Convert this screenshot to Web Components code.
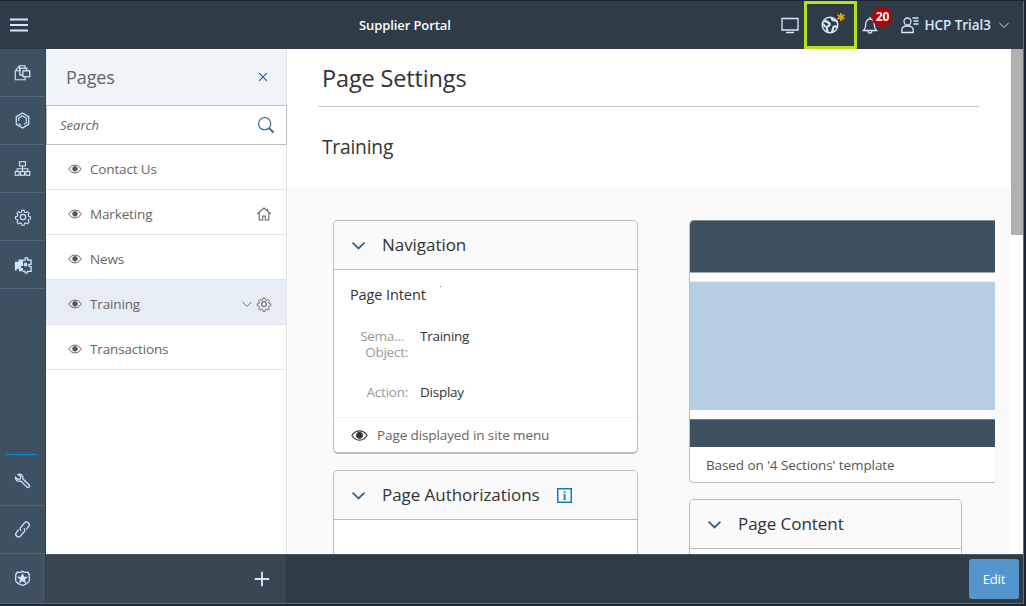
<!DOCTYPE html>
<html lang="en"><head><meta charset="utf-8"><title>Supplier Portal</title>
<style>
html,body{margin:0;height:606px;overflow:hidden;background:#1b2630;font-family:"Open Sans","Liberation Sans",sans-serif}
</style></head><body>
<app-shell>
  <app-header slot="header"></app-header>
  <side-rail slot="rail"></side-rail>
  <pages-panel slot="panel">
    <page-row label="Contact Us"></page-row>
    <page-row label="Marketing" trail="home"></page-row>
    <page-row label="News"></page-row>
    <page-row label="Training" selected trail="settings"></page-row>
    <page-row label="Transactions"></page-row>
  </pages-panel>
  <settings-main slot="main">
    <info-card slot="left" title="Navigation" style="height:234px"><nav-details></nav-details></info-card>
    <info-card slot="left" title="Page Authorizations" info style="height:200px"></info-card>
    <template-preview slot="right"></template-preview>
    <info-card slot="right" title="Page Content" style="width:273px;height:200px"></info-card>
  </settings-main>
  <app-footer slot="footer"></app-footer>
</app-shell>
<script>
const ICONS={
menu:'<path d="M1 4.500h18M1 10h18M1 15.500h18" stroke-width="2"/>',
monitor:'<path d="M2 3.500h16v11.500H2zM6 17.500h8"/>',
globe:'<circle cx="10" cy="10" r="7.800" stroke-width="1.500"/><path d="M3.500 5.800c2.500.2 4.500 1 5.800 2.400 1.400 1.500-.4 3-2 3.300-1.300.4-.6 2.500.6 5.300M12 2.800c-.5 1.700.6 2.800 2.400 2.700 1.200 0 2.200.2 3 1.500M17.500 12.500c-2-1.800-4.300-1.400-4.500.8-.2 1.800-.7 3-1.400 4.200M2.600 9c1.300.8 2.200 1.600 2.500 3" stroke-width="2.200"/>',
bell:'<path d="M3.500 15.500c1.800-1.500 2.200-3 2.200-6 0-3 1.800-5.500 4.300-5.500s4.300 2.500 4.300 5.500c0 3 .4 4.500 2.200 6zM8 15.800c0 3 4 3 4 0M10 4V2"/>',
user:'<circle cx="7.500" cy="6.500" r="3.500"/><path d="M1.800 17.500v-2.500c0-2.500 2-4 5.700-4s5.700 1.500 5.700 4v2.500zM12.500 3h6M13.500 6h5M13.500 9h5"/>',
chev:'<path d="M3.500 7l6.500 6.500L16.500 7"/>',
chevb:'<path d="M3 6.500l7 7 7-7" stroke-width="2"/>',
close:'<path d="M4.500 4.500l11 11M15.500 4.500l-11 11" stroke-width="1.700"/>',
search:'<circle cx="8.500" cy="8.500" r="6.800"/><path d="M13.500 13.500l5 5" stroke-width="2"/>',
eye:'<path d="M1 10c2.500-3.800 5.500-5.500 9-5.500s6.500 1.700 9 5.500c-2.500 3.800-5.500 5.500-9 5.500S3.500 13.800 1 10z"/><circle cx="10" cy="9.800" r="3.300" fill="currentColor"/>',
home:'<path d="M1.500 10L10 2.500l8.500 7.500M4 8.500V17.500h4.500v-5h3v5H16V8.500M14.500 5.500V3"/>',
settings:'<path d="M8.600 1.800h2.800l.5 2.200 1.700.7 1.900-1.200 2 2-1.200 1.900.7 1.700 2.200.5v2.800l-2.200.5-.7 1.700 1.200 1.900-2 2-1.900-1.200-1.700.7-.5 2.200H8.600l-.5-2.200-1.700-.7-1.900 1.200-2-2 1.200-1.900-.7-1.700-2.200-.5V9.600l2.200-.5.7-1.700-1.200-1.900 2-2 1.900 1.200 1.700-.7z" transform="translate(1 1) scale(.9)"/><circle cx="10" cy="10" r="3"/>',
pages:'<path d="M1.500 8L6.500 2H13v3M1.500 8v10.500H13V15M6.500 2.500V8H1.500"/><rect x="7" y="5" width="8" height="8" stroke-width="1.500"/><rect x="10.500" y="8" width="8" height="7" fill="#3f5161" stroke-width="1.500"/>',
cube:'<path d="M10 1.200l7.300 4.200v9.200L10 18.800l-7.300-4.200V5.400z" stroke-width="1.500"/><path d="M10 4.500l4.500 2.600v5.800L12 14.400M10 4.500L5.500 7.100v3.400M8.500 15.500l-3-1.800"/>',
sitemap:'<rect x="6.500" y="2" width="7" height="5"/><rect x="1.500" y="13.500" width="4.500" height="4.500"/><rect x="7.800" y="13.500" width="4.500" height="4.500"/><rect x="14" y="13.500" width="4.500" height="4.500"/><path d="M10 7v6.500M3.700 13.500V10.300h12.600v3.200"/>',
puzzle:'<path d="M1 6.500h4V4h5v7H8.500c-1.200 0-1.200 2.200 0 2.200H10V17H5.500v-2c0-1-2.500-1-2.500 0v1H1z" fill="currentColor" stroke="none"/><path d="M10 4.500h2.200V3c0-1.500 3-1.500 3 0v1.500H19V9.200h-1.700c-1.300 0-1.300 2.600 0 2.600H19V17h-4v1c0 1.300-2.800 1.300-2.800 0v-1H10" stroke-width="1.400"/><circle cx="12.800" cy="9.500" r="1.500" fill="currentColor"/>',
wrench:'<path d="M1.800 5l3.300 2.600 2.500-.8.500-2.400L4.800 1.800c3.300-1.200 6.600 1.500 5.700 5.300l7.400 7c1.500 1.600-1 4-2.600 2.500l-7.300-7.100C4.200 10.500 1 8.500 1.800 5z" stroke-width="1.500"/>',
link:'<g transform="rotate(-50 10 10)" stroke-width="1.500"><path d="M7 6.800H2.800a3.200 3.200 0 0 0 0 6.400H10.500a3.200 3.200 0 0 0 1.500-3"/><path d="M13 13.200h4.200a3.200 3.200 0 0 0 0-6.400H9.500a3.200 3.200 0 0 0-1.500 3"/></g>',
shield:'<path d="M10 1.500c1.500 1.200 3.800 1.500 6.200 1 .2 1.500.8 2.200 1.800 2.700-.8 4 1 5-.3 8-1 2-4.700 3.900-7.700 5-3-1.100-6.700-3-7.700-5-1.300-3 .5-4-.3-8 1-.5 1.600-1.200 1.800-2.700 2.400.5 4.700.2 6.200-1z" stroke-width="1.500"/><path d="M10 5l1.500 3.300 3.500.3-2.700 2.300.9 3.500-3.200-1.900-3.200 1.900.9-3.500L5 8.600l3.500-.3z" fill="currentColor"/>',
plus:'<path d="M10 1v18M1 10h18" stroke-width="2.300"/>',
star:'<path d="M10 2v16M3 6l14 8M17 6L3 14" stroke-width="3.200" stroke="#f0ab00"/>'
};
class UiIcon extends HTMLElement{
  connectedCallback(){
    const s=this.getAttribute('size')||20,n=this.getAttribute('name');
    this.attachShadow({mode:'open'}).innerHTML=`<style>:host{display:inline-flex;flex:none;line-height:0}svg{fill:none;stroke:currentColor;stroke-width:1.300;overflow:visible}</style><svg width="${s}" height="${s}" viewBox="0 0 20 20">${ICONS[n]}</svg>`;
  }
}
customElements.define('ui-icon',UiIcon);

function def(name,html){
  customElements.define(name,class extends HTMLElement{
    connectedCallback(){
      this.attachShadow({mode:'open'}).innerHTML=html;
    }
  });
}

def('app-shell',`<style>
:host{display:block;box-sizing:border-box;width:1026px;height:606px;padding:1px 2px 2px 0;background:#1b2630}
.win{height:100%;box-sizing:border-box;border-right:1px solid #2d78b8;border-bottom:1px solid #2d78b8;display:flex;flex-direction:column}
.body{flex:1;display:flex;min-height:0}
.right{flex:1;min-width:0;display:flex;flex-direction:column}
.mid{flex:1;min-height:0;display:flex;overflow:hidden}
</style>
<div class="win"><slot name="header"></slot>
<div class="body"><slot name="rail"></slot>
<div class="right"><div class="mid"><slot name="panel"></slot><slot name="main"></slot></div><slot name="footer"></slot></div></div></div>`);

def('app-header',`<style>
:host{display:flex;flex:none;height:48px;align-items:center;background:#2f3c48;color:#d1e8ff;position:relative}
.burger{margin-left:9px}
.title{position:absolute;left:359px;top:15px;font-size:13px;line-height:18px;font-weight:600;color:#fff;letter-spacing:-.1px}
.end{margin-left:auto;display:flex;align-items:center;height:48px;padding-right:12px}
.mon{margin-right:4px}
.hl{box-sizing:border-box;width:53px;height:48px;border:3px solid #b4e31c;display:flex;align-items:center;justify-content:center;position:relative;padding-right:2px}
.star{position:absolute;left:29px;top:8px}
.bell{position:relative;width:26px;height:48px;display:flex;align-items:center;justify-content:center;margin-right:17px}
.badge{position:absolute;left:15px;top:6px;min-width:20px;height:20px;border-radius:10px;background:#b00;color:#fff;font-size:12px;font-weight:700;line-height:20px;text-align:center;letter-spacing:-.2px}
.name{font-size:13.500px;font-weight:600;color:#d1e8ff;margin:0 6px 0 4px;letter-spacing:-.05px;white-space:nowrap}
</style>
<ui-icon class="burger" name="menu" size="20"></ui-icon>
<span class="title">Supplier Portal</span>
<div class="end">
<ui-icon class="mon" name="monitor" size="20"></ui-icon>
<div class="hl"><ui-icon name="globe" size="20"></ui-icon><ui-icon class="star" name="star" size="10"></ui-icon></div>
<div class="bell"><ui-icon name="bell" size="20"></ui-icon><span class="badge">20</span></div>
<ui-icon name="user" size="20"></ui-icon>
<span class="name">HCP Trial3</span>
<ui-icon name="chev" size="14"></ui-icon>
</div>`);

customElements.define('rail-item',class extends HTMLElement{connectedCallback(){
 this.attachShadow({mode:'open'}).innerHTML=`<style>:host{display:flex;height:47px;align-items:center;justify-content:center;border-bottom:1px solid #50667a;color:#cfe6ff}:host([last]){border-bottom:0;height:49px}</style><ui-icon name="${this.getAttribute('name')}" size="${this.getAttribute('size')||17}"></ui-icon>`;
}});
def('side-rail',`<style>
:host{display:flex;flex:none;flex-direction:column;box-sizing:border-box;width:46px;background:#3f5161;border-right:1px solid #33414f}
.sp{flex:1}
.mark{height:1px;background:#0a8ad6;margin:0 8px 3px 6px}
</style>
<rail-item name="pages"></rail-item><rail-item name="cube"></rail-item><rail-item name="sitemap"></rail-item><rail-item name="settings" size="18"></rail-item><rail-item name="puzzle" size="18"></rail-item>
<div class="sp"></div><div class="mark"></div>
<rail-item name="wrench"></rail-item><rail-item name="link"></rail-item><rail-item name="shield" last></rail-item>`);

def('pages-panel',`<style>
:host{display:flex;flex:none;flex-direction:column;box-sizing:border-box;width:241px;background:#fff;border-right:1px solid #e3e3e3}
.head{height:56px;flex:none;box-sizing:border-box;background:#eff4f9;display:flex;align-items:center;justify-content:space-between;padding:0 16px 0 20px;font-size:18px;color:#666}
.head span{margin-bottom:1px;letter-spacing:-.1px}
ui-icon{color:#346187}
.search{box-sizing:border-box;height:40px;flex:none;border:1px solid #bfbfbf;display:flex;align-items:center;justify-content:space-between;padding:0 11px 0 13px;font-style:italic;font-size:13px;color:#666;background:#fff;margin-right:-1px}
</style>
<div class="head"><span>Pages</span><ui-icon name="close" size="14"></ui-icon></div>
<div class="search"><span>Search</span><ui-icon name="search" size="18"></ui-icon></div>
<slot></slot>`);

customElements.define('page-row',class extends HTMLElement{connectedCallback(){
 const t=this.getAttribute('trail');
 let trail='';
 if(t==='home')trail='<ui-icon name="home" size="16"></ui-icon>';
 if(t==='settings')trail='<ui-icon name="chev" size="14" style="margin-right:2px"></ui-icon><ui-icon name="settings" size="16"></ui-icon>';
 this.attachShadow({mode:'open'}).innerHTML=`<style>
 :host{display:flex;box-sizing:border-box;height:45px;padding:4px 14px 0 22px;align-items:center;border-bottom:1px solid #e4e4e4;color:#666;font-size:13.500px}
 :host([selected]){background:#e7edf5}
 .eye{margin-right:8px;color:#555}
 .t{flex:1;letter-spacing:-.15px}
 </style><ui-icon class="eye" name="eye" size="14"></ui-icon><span class="t">${this.getAttribute('label')}</span>${trail}`;
}});

def('settings-main',`<style>
:host{display:flex;flex:1;min-width:0;background:#fff}
.scroll{flex:1;min-width:0;display:flex;flex-direction:column;overflow:hidden}
.top{flex:none;height:138px;box-sizing:border-box;padding:13px 32px 0 31px;color:#333}
h1{margin:0 0 0 4px;font-size:23.500px;font-weight:400;line-height:32px;letter-spacing:-.15px}
.rule{height:1px;background:#c8c8c8;margin-top:12px}
h2{margin:26px 0 0 4px;font-size:19.200px;font-weight:400;line-height:28px;letter-spacing:-.2px}
.content{flex:1;background:#fafafa;padding:33px 16px 0 46px;min-height:0}
.clip{overflow:hidden;display:flex;gap:51px;height:400px}
.col{flex:none;display:flex;flex-direction:column;gap:16px}
.col.l{width:305px}.col.r{width:400px}
.bar{flex:none;width:12px;background:#fff}
.thumb{height:186px;background:#b0b0b0}
</style>
<div class="scroll"><div class="top"><h1>Page Settings</h1><div class="rule"></div><h2>Training</h2></div>
<div class="content"><div class="clip"><div class="col l"><slot name="left"></slot></div><div class="col r"><slot name="right"></slot></div></div></div></div>
<div class="bar"><div class="thumb"></div></div>`);

customElements.define('info-card',class extends HTMLElement{connectedCallback(){
 const info=this.hasAttribute('info')?`<svg class="i" width="15" height="15" viewBox="0 0 15 15"><rect x=".75" y=".75" width="13.500" height="13.500" fill="none" stroke="#0a7cc0" stroke-width="1.500"/><text x="7.500" y="12" text-anchor="middle" font-family="Liberation Serif" font-weight="700" font-size="12" fill="#0a7cc0">i</text></svg>`:'';
 this.attachShadow({mode:'open'}).innerHTML=`<style>
 :host{display:block;flex:none;box-sizing:border-box;background:#fff;border:1px solid #bdbdbd;border-bottom-width:2px;border-radius:5px;overflow:hidden}
 .h{height:48px;background:#fafafa;border-bottom:1px solid #bdbdbd;display:flex;align-items:center;padding-left:16px;color:#333;font-size:17px;letter-spacing:-.05px}
 .h span{margin-bottom:2px}
 .c{color:#346187;margin-right:15px}
 .i{margin-left:17px}
 </style><div class="h"><ui-icon class="c" name="chevb" size="17"></ui-icon><span>${this.getAttribute('title')}</span>${info}</div><slot></slot>`;
 this.removeAttribute('title');
}});

def('nav-details',`<style>
:host{display:flex;flex-direction:column;height:184px;color:#333;font-size:13.500px}
.pi{margin:14px 0 0 16px;font-size:14.500px;line-height:22px;letter-spacing:-.1px;position:relative}
.dot{position:absolute;left:90px;top:2px;width:1px;height:1px;background:#3a8cc8}
.rows{display:grid;grid-template-columns:74px 1fr;column-gap:12px;margin-top:22px;line-height:16px;letter-spacing:-.25px}
.l{color:#999;text-align:right}
.l span{display:block;margin-right:4px}
.g{margin-top:24px}
.foot{margin-top:auto;height:37px;box-sizing:border-box;padding-bottom:2px;border-top:1px solid #f2f2f2;display:flex;align-items:center;padding-left:17px;color:#666;font-size:13.500px;letter-spacing:-.1px}
.foot ui-icon{color:#333;margin-right:9px}
</style>
<div class="pi">Page Intent<i class="dot"></i></div>
<div class="rows"><div class="l"><span>Sema...</span>Object:</div><div>Training</div><div class="l g">Action:</div><div class="g">Display</div></div>
<div class="foot"><ui-icon name="eye" size="17"></ui-icon>Page displayed in site menu</div>`);

def('template-preview',`<style>
:host{display:block;flex:none;box-sizing:border-box;height:263px;background:#fff;border:1px solid #bdbdbd;border-top-color:#8a8a8a;border-right:0;border-radius:5px 0 0 5px;overflow:hidden;color:#555;font-size:13.500px}
.a{height:51px;background:#3f5161;border-bottom:1px solid #a8a8a8}
.b{height:8px;background:#fff;border-bottom:1px solid #f0f0f0}
.c{height:128px;background:#b7cde3}
.d{height:8px;background:#fff}
.e{height:28px;background:#3f5161;border-top:1px solid #777;box-sizing:border-box;margin-top:1px}
.f{padding:9px 16px;line-height:18px;letter-spacing:-.1px;white-space:nowrap}
.v{width:305px}
</style><div class="v"><div class="a"></div><div class="b"></div><div class="c"></div><div class="d"></div><div class="e"></div><div class="f">Based on '4 Sections' template</div></div>`);

def('app-footer',`<style>
:host{display:flex;flex:none;height:49px;box-sizing:border-box;background:#2f3c48;border-top:1px solid #47586a;align-items:center;color:#d1e8ff}
.add{width:240px;height:100%;background:#3a4552;display:flex;align-items:center;justify-content:flex-end;padding-right:16px;box-sizing:border-box}
button{margin-left:auto;margin-right:4px;width:50px;height:40px;border:0;border-radius:3px;background:#5495cd;color:#fff;font:13px "Open Sans","Liberation Sans",sans-serif;letter-spacing:-.1px;padding:0}
</style><div class="add"><ui-icon name="plus" size="16"></ui-icon></div><button>Edit</button>`);
</script>
</body></html>
